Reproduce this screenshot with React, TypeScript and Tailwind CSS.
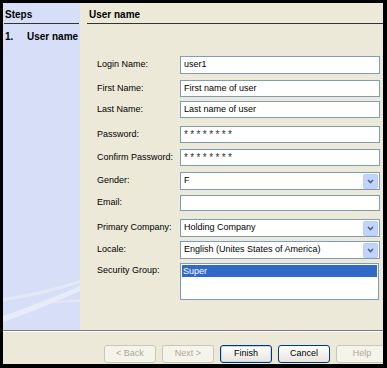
const font = { fontFamily: '"Liberation Sans", Arial, sans-serif' };

function Chevron() {
  return (
    <span className="flex h-[15px] w-[15px] items-center justify-center rounded-[2px] border border-[#b9cdf6] bg-[#c3d4fc]">
      <svg width="7" height="5" viewBox="0 0 7 5">
        <path d="M1 1 L3.5 3.5 L6 1" fill="none" stroke="#4d6185" strokeWidth="1.6" />
      </svg>
    </span>
  );
}

function Field({
  label,
  value,
  top,
  h,
  select,
  secret,
}: {
  label: string;
  value?: string;
  top: number;
  h: number;
  select?: boolean;
  secret?: boolean;
}) {
  return (
    <div className="flex items-center" style={{ marginTop: top, height: h }}>
      <div className="w-[83px] shrink-0 whitespace-nowrap text-[9px] text-black">{label}</div>
      <div className="flex h-full w-[200px] items-center justify-between border border-[#7f9db9] bg-white pl-[3px] pr-[1px] text-[9px] text-black">
        <span className={secret ? 'text-[10px] tracking-[2.4px] text-[#333]' : ''}>{value}</span>
        {select && <Chevron />}
      </div>
    </div>
  );
}

function Btn({ label, disabled, def }: { label: string; disabled?: boolean; def?: boolean }) {
  return (
    <div
      className={
        'flex h-[18px] w-[52px] shrink-0 items-center justify-center rounded-[3px] border text-[9px] ' +
        (disabled
          ? 'border-[#c9c7ba] bg-[#f5f4ea] text-[#aca899]'
          : def
          ? 'border-[#003c74] bg-gradient-to-b from-white to-[#e6e4dc] text-black shadow-[inset_0_0_0_1px_#c2d4f4]'
          : 'border-[#003c74] bg-gradient-to-b from-white to-[#e6e4dc] text-black')
      }
    >
      {label}
    </div>
  );
}

export default function App() {
  return (
    <div className="h-[368px] w-[387px] bg-black pb-[4px] pl-[3px] pr-[4px] pt-[3px]" style={font}>
      <div className="flex h-full flex-col bg-[#ece9d8]">
        <div className="flex h-[327px]">
          <div className="relative w-[77px] shrink-0 overflow-hidden bg-[#d6dff7]">
            <svg className="absolute bottom-0 left-0" width="77" height="50" viewBox="0 0 77 50">
              <path d="M0 36 Q40 22 77 6 L77 11 Q40 28 0 42 Z" fill="white" opacity="0.4" />
              <path d="M0 18 Q40 12 77 0 L77 3 Q40 16 0 21 Z" fill="white" opacity="0.3" />
              <path d="M20 24 L77 19 L77 22 Z" fill="#f4e6f4" opacity="0.6" />
            </svg>
            <div className="relative px-[1px] pt-[4px]">
              <div className="border-b border-[#333] pb-[1px] pl-[1px] text-[10px] font-bold text-black">Steps</div>
              <div className="mt-[5px] flex whitespace-nowrap pl-[1px] text-[10px] font-bold text-black">
                <span className="w-[22px]">1.</span>
                <span>User name</span>
              </div>
            </div>
          </div>
          <div className="flex-1 pt-[4px]">
            <div className="ml-[7px] border-b border-[#333] pb-[1px] pl-[2px] text-[10px] font-bold text-black">
              User name
            </div>
            <div className="pl-[17px]">
              <Field label="Login Name:" value="user1" top={32} h={18} />
              <Field label="First Name:" value="First name of user" top={6} h={17} />
              <Field label="Last Name:" value="Last name of user" top={4} h={17} />
              <Field label="Password:" value="********" top={8} h={17} secret />
              <Field label="Confirm Password:" value="********" top={6} h={17} secret />
              <Field label="Gender:" value="F" top={6} h={18} select />
              <Field label="Email:" top={5} h={16} />
              <Field label="Primary Company:" value="Holding Company" top={8} h={18} select />
              <Field label="Locale:" value="English (Unites States of America)" top={4} h={18} select />
              <div className="mt-[4px] flex items-start">
                <div className="w-[83px] shrink-0 pt-[1px] text-[9px] text-black">Security Group:</div>
                <div className="h-[37px] w-[199px] border border-[#7f9db9] bg-white p-[1px]">
                  <div className="h-[12px] bg-[#316ac5] pl-[1px] text-[9px] leading-[12px] text-white">Super</div>
                </div>
              </div>
            </div>
          </div>
        </div>
        <div className="h-[1px] bg-[#7a7a80]" />
        <div className="h-[1px] bg-white" />
        <div className="flex flex-1 items-start gap-[6px] overflow-hidden pl-[101px] pt-[13px]">
          <Btn label="< Back" disabled />
          <Btn label="Next >" disabled />
          <Btn label="Finish" def />
          <Btn label="Cancel" />
          <Btn label="Help" disabled />
        </div>
      </div>
    </div>
  );
}
